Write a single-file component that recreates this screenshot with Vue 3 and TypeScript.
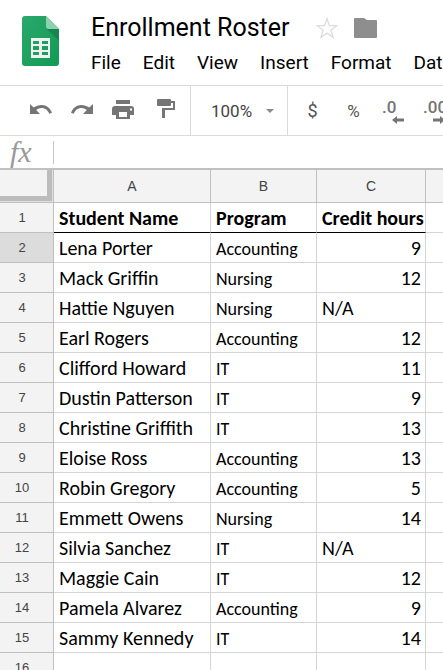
<script setup lang="ts">
import { ref } from 'vue'

interface Student {
  name: string
  program: string
  credits: number | 'N/A'
}

const menus: string[] = ['File', 'Edit', 'View', 'Insert', 'Format', 'Data']
const columns: string[] = ['A', 'B', 'C', '']
const zoom = ref('100%')
const formula = ref('')
const selectedRow = ref(2)

const students: Student[] = [
  { name: 'Lena Porter', program: 'Accounting', credits: 9 },
  { name: 'Mack Griffin', program: 'Nursing', credits: 12 },
  { name: 'Hattie Nguyen', program: 'Nursing', credits: 'N/A' },
  { name: 'Earl Rogers', program: 'Accounting', credits: 12 },
  { name: 'Clifford Howard', program: 'IT', credits: 11 },
  { name: 'Dustin Patterson', program: 'IT', credits: 9 },
  { name: 'Christine Griffith', program: 'IT', credits: 13 },
  { name: 'Eloise Ross', program: 'Accounting', credits: 13 },
  { name: 'Robin Gregory', program: 'Accounting', credits: 5 },
  { name: 'Emmett Owens', program: 'Nursing', credits: 14 },
  { name: 'Silvia Sanchez', program: 'IT', credits: 'N/A' },
  { name: 'Maggie Cain', program: 'IT', credits: 12 },
  { name: 'Pamela Alvarez', program: 'Accounting', credits: 9 },
  { name: 'Sammy Kennedy', program: 'IT', credits: 14 },
]
</script>

<template>
  <div class="app">
    <header class="header">
      <a class="logo" href="#" aria-label="Sheets home">
        <svg width="37" height="50" viewBox="0 0 37 50">
          <defs>
            <linearGradient id="sheet" x1="0" y1="0" x2="1" y2="1">
              <stop offset="0" stop-color="#2aa86c" />
              <stop offset="1" stop-color="#129a55" />
            </linearGradient>
          </defs>
          <path fill="url(#sheet)" d="M3 0H24L37 13V47a3 3 0 0 1-3 3H3a3 3 0 0 1-3-3V3a3 3 0 0 1 3-3z" />
          <path fill="#17854e" d="M25 13H37V25z" />
          <path fill="#8ed1b1" d="M24 0L37 13H27a3 3 0 0 1-3-3z" />
          <path fill="#f1f1f1" fill-rule="evenodd" d="M9 22H28V42H9zM11 25v3h6v-3zM20 25v3h6v-3zM11 30v4h6v-4zM20 30v4h6v-4zM11 36v3h6v-3zM20 36v3h6v-3z" />
        </svg>
      </a>
      <div class="heading">
        <div class="title-row">
          <h1>Enrollment Roster</h1>
          <button class="mark" aria-label="Star">
            <svg width="22" height="24" viewBox="0 0 22 24">
              <path fill="none" stroke="#dcdcdc" stroke-width="1.3" d="M11 2.5L13.4 9.6L20.8 9.7L14.9 14.2L17.1 21.4L11 17.1L4.9 21.4L7.1 14.2L1.2 9.7L8.6 9.6z" />
            </svg>
          </button>
          <button class="mark" aria-label="Move to folder">
            <svg width="23" height="24" viewBox="0 0 23 24">
              <path fill="#8e8e8e" d="M1 2H10L13 4H22a1 1 0 0 1 1 1V21a1 1 0 0 1-1 1H1a1 1 0 0 1-1-1V3a1 1 0 0 1 1-1z" />
            </svg>
          </button>
        </div>
        <nav class="menus">
          <button v-for="menu in menus" :key="menu">{{ menu }}</button>
        </nav>
      </div>
    </header>

    <div class="toolbar" role="toolbar">
      <div class="group actions">
        <button class="tool" aria-label="Undo">
          <svg width="25" height="25" viewBox="0 0 25 25">
            <path fill="#757575" d="M1 6L4.7 9.6C7 7.8 9.8 6.9 12.7 6.9C17.4 6.9 21.5 10 23 14.8L20.2 15.8C19 12.3 16.2 10 12.7 10C10.6 10 8.7 10.7 7.2 12L11 16H1z" />
          </svg>
        </button>
        <button class="tool" aria-label="Redo">
          <svg width="25" height="25" viewBox="0 0 25 25">
            <path fill="#757575" d="M23 6L19.3 9.6C17 7.8 14.2 6.9 11.3 6.9C6.6 6.9 2.5 10 1 14.8L3.8 15.8C5 12.3 7.8 10 11.3 10C13.4 10 15.3 10.7 16.8 12L13 16H23z" />
          </svg>
        </button>
        <button class="tool" aria-label="Print">
          <svg width="25" height="25" viewBox="0 0 25 25">
            <path fill="#757575" d="M5 2H19V6H5z" />
            <path fill="#757575" fill-rule="evenodd" d="M4 8H20a3 3 0 0 1 3 3V17H19V21H5V17H1V11a3 3 0 0 1 3-3zM8 14V19H16V14zM19 10.5v2h2v-2z" />
          </svg>
        </button>
        <button class="tool" aria-label="Paint format">
          <svg width="25" height="25" viewBox="0 0 25 25">
            <path fill="#757575" d="M6 1H18a1 1 0 0 1 1 1V7a1 1 0 0 1-1 1H6a1 1 0 0 1-1-1V2a1 1 0 0 1 1-1z" />
            <path fill="none" stroke="#757575" stroke-width="2" d="M19 4H22V11H12V20" />
            <path fill="#757575" d="M10 10H13V20H10z" />
          </svg>
        </button>
      </div>
      <label class="group zoom">
        <select v-model="zoom" aria-label="Zoom">
          <option>50%</option>
          <option>75%</option>
          <option>100%</option>
          <option>150%</option>
          <option>200%</option>
        </select>
        <svg width="8" height="4" viewBox="0 0 8 4"><path fill="#8a8a8a" d="M0 0H8L4 4z" /></svg>
      </label>
      <div class="group formats">
        <button class="tool currency" aria-label="Format as currency">$</button>
        <button class="tool" aria-label="Format as percent">%</button>
        <button class="tool decimal" aria-label="Decrease decimal places">
          <span>.0</span>
          <svg width="12" height="8" viewBox="0 0 12 8"><path fill="#757575" d="M0 4L5 0V2.5H12V5.5H5V8z" /></svg>
        </button>
        <button class="tool decimal" aria-label="Increase decimal places">
          <span>.00</span>
          <svg width="12" height="8" viewBox="0 0 12 8"><path fill="#757575" d="M12 4L7 0V2.5H0V5.5H7V8z" /></svg>
        </button>
      </div>
    </div>

    <div class="formula">
      <label for="formula">fx</label>
      <input id="formula" v-model="formula" type="text" autocomplete="off" />
    </div>

    <table class="grid">
      <colgroup>
        <col class="col-index" />
        <col class="col-a" />
        <col class="col-b" />
        <col class="col-c" />
        <col />
      </colgroup>
      <thead>
        <tr>
          <td class="corner"></td>
          <th v-for="column in columns" :key="column" scope="col">{{ column }}</th>
        </tr>
      </thead>
      <tbody>
        <tr class="titles">
          <th scope="row">1</th>
          <td>Student Name</td>
          <td>Program</td>
          <td>Credit hours</td>
          <td></td>
        </tr>
        <tr v-for="(student, i) in students" :key="student.name" :class="{ selected: selectedRow === i + 2 }" @click="selectedRow = i + 2">
          <th scope="row">{{ i + 2 }}</th>
          <td>{{ student.name }}</td>
          <td class="program">{{ student.program }}</td>
          <td :class="{ number: student.credits !== 'N/A' }">{{ student.credits }}</td>
          <td></td>
        </tr>
        <tr>
          <th scope="row">16</th>
          <td></td>
          <td></td>
          <td></td>
          <td></td>
        </tr>
      </tbody>
    </table>
  </div>
</template>

<style>
html,
body {
  background: #fff;
  overflow: hidden;
}
</style>

<style scoped>
.app {
  height: 100vh;
  overflow: hidden;
  font-family: Roboto, sans-serif;
  color: #000;
}

button,
select,
input {
  border: 0;
  padding: 0;
  margin: 0;
  background: none;
  font: inherit;
  color: inherit;
}

svg {
  display: block;
}

.header {
  display: flex;
  height: 85px;
}

.logo {
  flex: none;
  padding: 16px 32px 0 22px;
}

.heading {
  flex: 1;
  min-width: 0;
  padding-top: 12px;
}

.title-row {
  display: flex;
  align-items: center;
  height: 32px;
}

h1 {
  margin: 0 26px 0 0;
  font-size: 25px;
  font-weight: 400;
  line-height: 32px;
  white-space: nowrap;
}

.mark {
  margin-right: 16px;
}

.menus {
  display: flex;
  gap: 22px;
  overflow: hidden;
  padding-top: 6px;
}

.menus button {
  flex: none;
  font-size: 19px;
  line-height: 26px;
}

.toolbar {
  display: flex;
  height: 49px;
  overflow: hidden;
  border-top: 1px solid #dadada;
  border-bottom: 1px solid #dadada;
}

.group {
  display: flex;
  flex: none;
  align-items: center;
}

.actions {
  padding: 0 5px 0 21px;
  border-right: 1px solid #dadada;
}

.tool {
  display: flex;
  flex: none;
  align-items: center;
  justify-content: center;
  width: 41px;
  height: 49px;
  font-size: 17px;
  color: #555;
}

.currency {
  font-size: 18px;
}

.zoom {
  gap: 14px;
  padding: 0 13px 0 20px;
  border-right: 1px solid #dadada;
  color: #444;
}

.zoom select {
  appearance: none;
  width: 41px;
  font-size: 17px;
  line-height: 24px;
}

.formats {
  padding-left: 4px;
}

.decimal {
  flex-direction: column;
  align-items: flex-start;
  padding-left: 8px;
  font-weight: 500;
  line-height: 18px;
  color: #757575;
}

.decimal svg {
  margin-left: 10px;
}

.formula {
  display: flex;
  align-items: center;
  height: 32px;
  border-bottom: 2px solid #c0c0c0;
}

.formula label {
  width: 43px;
  padding-left: 10px;
  font: italic 30px/28px "Liberation Serif", serif;
  color: #999;
}

.formula input {
  flex: 1;
  min-width: 0;
  height: 23px;
  padding-left: 8px;
  border-left: 1px solid #c8c8c8;
  outline: 0;
  font-size: 16px;
}

.grid {
  width: 100%;
  table-layout: fixed;
  border-collapse: separate;
  border-spacing: 0;
}

.col-index {
  width: 54px;
}

.col-a {
  width: 157px;
}

.col-b {
  width: 106px;
}

.col-c {
  width: 109px;
}

.grid th,
.grid td {
  box-sizing: border-box;
  height: 30px;
  padding: 0 4px;
  border-right: 1px solid #d5d5d5;
  border-bottom: 1px solid #d5d5d5;
  white-space: nowrap;
}

.grid th {
  border-color: #c0c0c0;
  background: #f3f3f3;
  font: 13px/20px "Liberation Sans", sans-serif;
  color: #444;
}

.grid thead th {
  height: 33px;
  font-size: 14px;
}

.grid tbody th {
  padding-right: 13px;
}

.grid .corner {
  height: 33px;
  border-right: 1px solid #c0c0c0;
  border-bottom: 1px solid #c0c0c0;
  background: #f3f3f3;
  box-shadow: inset -1px -1px #e0e0e0, inset -6px -6px #bcbcbc;
}

.grid tbody td {
  padding: 0 4px 0 5px;
  font: 20px/28px Carlito, Lato, sans-serif;
}

.grid tbody .program {
  padding-top: 2px;
  font-size: 18px;
  line-height: 26px;
}

.grid .titles td {
  font-weight: 700;
  border-bottom-color: #000;
}

.grid .titles td:last-child {
  border-bottom-color: #d5d5d5;
}

.grid .selected th {
  background: #dcdcdc;
}

.grid .number {
  text-align: right;
}

.grid th:last-child,
.grid td:last-child {
  border-right: 0;
}
</style>
